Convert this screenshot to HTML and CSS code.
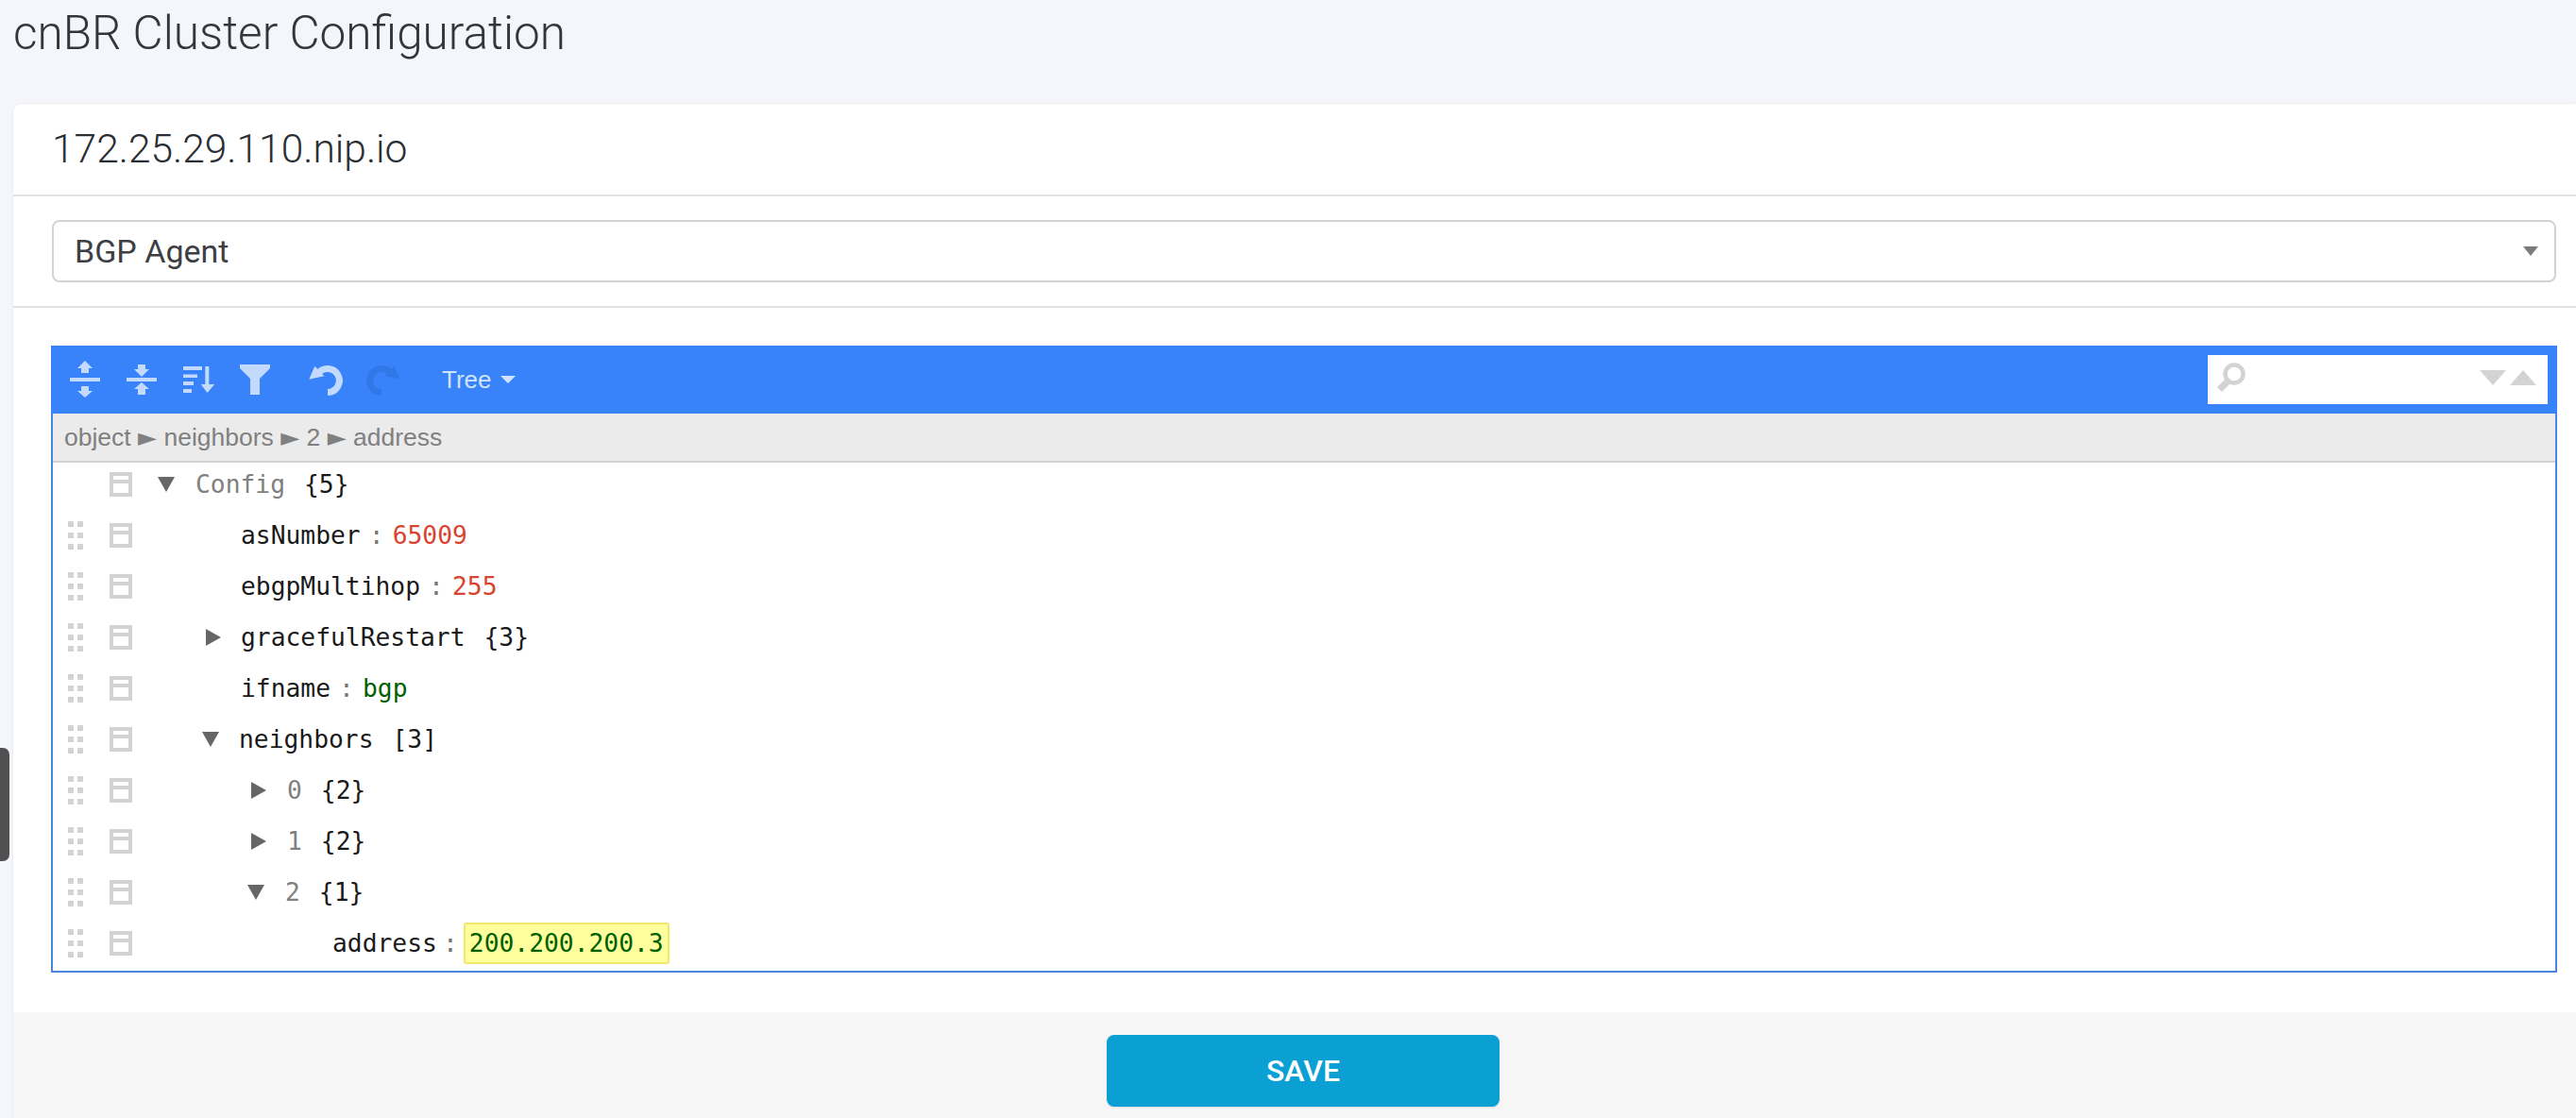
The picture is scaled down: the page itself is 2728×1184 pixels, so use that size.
FILE: index.html
```html
<!DOCTYPE html>
<html lang="en">
<head>
<meta charset="utf-8">
<title>cnBR Cluster Configuration</title>
<link rel="stylesheet" href="styles.css">
</head>
<body>
<svg width="0" height="0" class="defs">
  <symbol id="grip" viewBox="0 0 16 30"><path fill="#d3d3d3" d="M0 0h6v6H0zM10 0h6v6h-6zM0 12h6v6H0zM10 12h6v6h-6zM0 24h6v6H0zM10 24h6v6h-6z"/></symbol>
  <symbol id="ctx" viewBox="0 0 24 26"><path fill="#d3d3d3" fill-rule="evenodd" d="M0 0h24v26H0zM4 4v4h16V4zM4 12v10h16V12z"/></symbol>
</svg>
<div class="grip-tab"></div>
<h1 class="page-title">cnBR Cluster Configuration</h1>
<main class="card">
  <header class="card-head">172.25.29.110.nip.io</header>
  <section class="select-section">
    <div class="select"><span>BGP Agent</span><i class="select-caret"></i></div>
  </section>
  <section class="editor-section">
    <div class="editor">
      <div class="menu">
        <svg class="mi mi-expand" viewBox="0 0 32 40"><path fill="#c3daff" d="M16 0l8 8h-4v5h-8V8H8zM0 18h32v4H0zM12 27h8v5h4l-8 7-8-7h4z"/></svg>
        <svg class="mi mi-collapse" viewBox="0 0 32 40"><path fill="#c3daff" d="M12 4h8v5h4l-8 8-8-8h4zM0 18h32v4H0zM16 23l8 7h-4v6h-8v-6H8z"/></svg>
        <svg class="mi mi-sort" viewBox="0 0 34 28"><path fill="#c3daff" d="M0 0h20v4H0zM0 8.500h15v3.500H0zM0 16h11v4H0zM0 24h9v4H0zM23.300 0h4v19h6L25.500 28 18.700 19h4.600z"/></svg>
        <svg class="mi mi-filter" viewBox="0 0 32 32"><path fill="#c3daff" d="M0 0h32v4L21 15v17H11V15L0 4z"/></svg>
        <svg class="mi mi-undo" viewBox="0 0 36 34"><path fill="none" stroke="#c3daff" stroke-width="7" d="M9.500 11A12.500 12.500 0 1 1 20 30.500"/><path fill="#c3daff" d="M0.300 16.700L6.300 2.700 16.300 13.300z"/></svg>
        <svg class="mi mi-redo" viewBox="0 0 36 34"><g transform="matrix(-1 0 0 1 36 0)"><path fill="none" stroke="#3078e8" stroke-width="7" d="M9.500 11A12.500 12.500 0 1 1 20 30.500"/><path fill="#3078e8" d="M0.300 16.700L6.300 2.700 16.300 13.300z"/></g></svg>
        <span class="mode">Tree<i class="mode-caret"></i></span>
        <div class="search">
          <svg class="search-icon" viewBox="0 0 31 31"><circle cx="19" cy="12" r="9.500" fill="none" stroke="#d3d3d3" stroke-width="4.500"/><path fill="#d3d3d3" d="M11 16l5 5-10 10-5-5z"/></svg>
          <i class="tri tri-down"></i><i class="tri tri-up"></i>
        </div>
      </div>
      <div class="path">object <b>►</b> neighbors <b>►</b> 2 <b>►</b> address</div>
      <div class="tree">
        <div class="row">
          <span class="grip-cell"></span>
          <svg class="ctx"><use href="#ctx"/></svg>
          <span class="arrow arrow-down a-root"></span><span class="label ro">Config</span><span class="count">{5}</span>
        </div>
        <div class="row">
          <svg class="grip"><use href="#grip"/></svg><svg class="ctx"><use href="#ctx"/></svg>
          <span class="key l1">asNumber</span><span class="colon">:</span><span class="num">65009</span>
        </div>
        <div class="row">
          <svg class="grip"><use href="#grip"/></svg><svg class="ctx"><use href="#ctx"/></svg>
          <span class="key l1">ebgpMultihop</span><span class="colon">:</span><span class="num">255</span>
        </div>
        <div class="row">
          <svg class="grip"><use href="#grip"/></svg><svg class="ctx"><use href="#ctx"/></svg>
          <span class="arrow arrow-right a-l1"></span><span class="label">gracefulRestart</span><span class="count">{3}</span>
        </div>
        <div class="row">
          <svg class="grip"><use href="#grip"/></svg><svg class="ctx"><use href="#ctx"/></svg>
          <span class="key l1">ifname</span><span class="colon">:</span><span class="str">bgp</span>
        </div>
        <div class="row">
          <svg class="grip"><use href="#grip"/></svg><svg class="ctx"><use href="#ctx"/></svg>
          <span class="arrow arrow-down a-l1"></span><span class="label">neighbors</span><span class="count">[3]</span>
        </div>
        <div class="row">
          <svg class="grip"><use href="#grip"/></svg><svg class="ctx"><use href="#ctx"/></svg>
          <span class="arrow arrow-right a-l2"></span><span class="label ro">0</span><span class="count">{2}</span>
        </div>
        <div class="row">
          <svg class="grip"><use href="#grip"/></svg><svg class="ctx"><use href="#ctx"/></svg>
          <span class="arrow arrow-right a-l2"></span><span class="label ro">1</span><span class="count">{2}</span>
        </div>
        <div class="row">
          <svg class="grip"><use href="#grip"/></svg><svg class="ctx"><use href="#ctx"/></svg>
          <span class="arrow arrow-down a-l2"></span><span class="label ro">2</span><span class="count">{1}</span>
        </div>
        <div class="row">
          <svg class="grip"><use href="#grip"/></svg><svg class="ctx"><use href="#ctx"/></svg>
          <span class="key l3">address</span><span class="colon colon-hl">:</span><span class="str hl">200.200.200.3</span>
        </div>
      </div>
    </div>
  </section>
  <footer class="card-foot"><button class="save" type="button">SAVE</button></footer>
</main>
</body>
</html>
```
FILE: styles.css
```css
html, body { margin: 0; height: 1184px; overflow: hidden; }
body { background: #f4f6fb; font-family: Roboto, "Liberation Sans", sans-serif; color: #2f3238; position: relative; }
.defs { position: absolute; }
.grip-tab { position: absolute; left: 0; top: 792px; width: 10px; height: 120px; background: #505050; border-radius: 0 7px 7px 0; }
.page-title { margin: 0; padding: 6px 0 0 14px; height: 104px; box-sizing: border-box; font-size: 49.500px; line-height: 58px; font-weight: 300; color: #33363c; }
.card { margin-left: 14px; background: #fff; border-radius: 8px 0 0 0; box-shadow: 0 0 2px rgba(0,0,0,.12); margin-top: 6px; }
.card-head { height: 96px; padding-left: 41px; font-size: 42.500px; font-weight: 300; line-height: 96px; color: #2b2e33; border-bottom: 2px solid #e2e3e6; }
.select-section { padding: 25px 21px 25px 41px; border-bottom: 2px solid #e2e3e6; }
.select { height: 62px; border: 2px solid #d2d3d8; border-radius: 8px; display: flex; align-items: center; justify-content: space-between; padding: 0 17px 0 22px; font-size: 34px; color: #3d3f44; }
.select-caret { border: 8px solid transparent; border-top: 10px solid #7b7b7b; border-bottom: 0; }
.editor-section { padding: 40px 20px 42px 40px; }
.editor { border: 2px solid #4a86e0; border-top: 0; height: 664px; box-sizing: border-box; }
.menu { height: 72px; margin: 0 -2px; background: #3883fa; display: flex; align-items: center; padding-left: 20px; position: relative; }
.mi { display: block; flex: none; }
.mi-expand { width: 32px; height: 40px; margin-right: 28px; }
.mi-collapse { width: 32px; height: 40px; margin-right: 28px; }
.mi-sort { width: 34px; height: 28px; margin-right: 26px; }
.mi-filter { width: 32px; height: 32px; margin-right: 41px; }
.mi-undo { width: 36px; height: 34px; margin-right: 25px; }
.mi-redo { width: 36px; height: 34px; margin-right: 44px; }
.mode { font-family: "Liberation Sans", Arial, sans-serif; font-size: 26px; color: #d2e3fe; display: flex; align-items: center; }
.mode-caret { margin-left: 9px; border: 8px solid transparent; border-top: 8px solid #d2e3fe; border-bottom: 0; }
.search { position: absolute; right: 10px; top: 10px; width: 360px; height: 52px; background: #fff; }
.search-icon { position: absolute; left: 9px; top: 8px; width: 31px; height: 31px; }
.tri { position: absolute; top: 16px; width: 0; height: 0; border-left: 14px solid transparent; border-right: 14px solid transparent; }
.tri-down { left: 288px; border-top: 16px solid #d3d3d3; }
.tri-up { left: 320px; border-bottom: 16px solid #d3d3d3; }
.path { height: 50px; background: #ebebeb; border-bottom: 2px solid #d3d3d3; font-family: "Liberation Sans", Arial, sans-serif; font-size: 26.500px; line-height: 50px; color: #808080; padding-left: 12px; white-space: pre; }
.path b { font-family: "DejaVu Sans", sans-serif; font-weight: 400; font-size: 26px; color: #808080; }
.tree { margin-top: -4px; font-family: "DejaVu Sans Mono", "Liberation Mono", monospace; font-size: 26.300px; color: #1a1a1a; }
.row { height: 54px; display: flex; align-items: center; position: relative; white-space: pre; }
.grip, .grip-cell { width: 16px; height: 30px; margin-left: 16px; flex: none; }
.ctx { width: 24px; height: 26px; margin-left: 28px; flex: none; }
.arrow { flex: none; width: 0; height: 0; }
.arrow-down { border-left: 9px solid transparent; border-right: 9px solid transparent; border-top: 16px solid #666; }
.arrow-right { border-top: 9px solid transparent; border-bottom: 9px solid transparent; border-left: 16px solid #666; }
.a-root { margin-left: 27px; margin-right: 22px; }
.a-l1 { margin-left: 78px; margin-right: 21px; }
.arrow-right.a-l2 { margin-left: 126px; margin-right: 22px; }
.arrow-down.a-l2 { margin-left: 122px; margin-right: 22px; }
.arrow-down.a-l1 { margin-left: 74px; margin-right: 21px; }
.ro { color: #808080; }
.count { margin-left: 20px; }
.key.l1 { margin-left: 115px; }
.key.l3 { margin-left: 212px; }
.colon { width: 34px; text-align: center; color: #777; flex: none; }
.colon-hl { width: 28px; }
.num { color: #d9432f; }
.str { color: #006000; }
.hl { background: #ffff9e; border: 2px solid #f4e76a; border-radius: 3px; padding: 0 4px; height: 40px; line-height: 40px; }
.card-foot { background: #f6f6f6; height: 112px; display: flex; justify-content: center; padding-top: 24px; box-sizing: border-box; }
.save { width: 416px; height: 76px; margin-left: 18px; border: 0; border-radius: 8px; background: #0ba0d3; color: #fff; font-family: Roboto, "Liberation Sans", sans-serif; font-size: 32px; font-weight: 500; box-shadow: 0 1px 2px rgba(0,0,0,.1); }
```
